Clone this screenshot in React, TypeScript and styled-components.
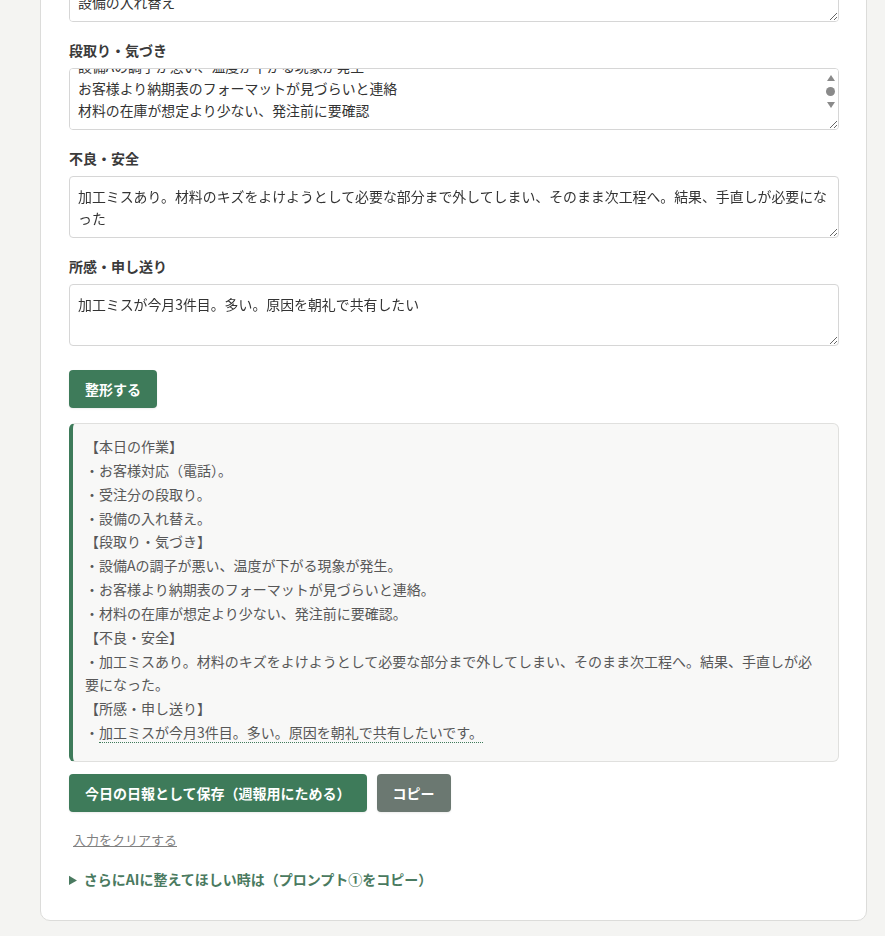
import React, { useEffect, useRef } from 'react';
import styled, { createGlobalStyle } from 'styled-components';

const GlobalStyle = createGlobalStyle`
  html, body {
    margin: 0;
    padding: 0;
    background: #f4f4f2;
    font-family: "Noto Sans CJK JP", "Noto Sans", sans-serif;
    color: #333;
    overflow: hidden;
  }
  * {
    box-sizing: border-box;
  }
`;

const green = '#3e7b5a';

const StyledPage = styled.div`
  padding: 0 18px 16px 40px;
`;

// the page is shown scrolled down, so the card starts above the viewport
const StyledCard = styled.div`
  margin-top: -97px;
  background: #fff;
  border: 1px solid #dcdcda;
  border-radius: 10px;
  padding: 28px 27px 30px 28px;
  display: flex;
  flex-direction: column;
`;

const StyledForm = styled.div`
  display: flex;
  flex-direction: column;
  gap: 18px;
`;

const StyledField = styled.div`
  display: flex;
  flex-direction: column;
`;

const StyledLabel = styled.label`
  font-size: 14px;
  line-height: 21px;
  font-weight: 700;
  color: #3a3a3a;
  margin-bottom: 7px;
`;

const StyledBox = styled.div`
  position: relative;
  display: flex;
`;

const StyledTextarea = styled.textarea`
  width: 100%;
  height: 62px;
  padding: 8px;
  border: 1px solid #d6d6d6;
  border-radius: 4px;
  font-family: inherit;
  font-size: 13.9px;
  line-height: 22px;
  color: #333;
  background: #fff;
  resize: vertical;
  outline: none;
`;

// native scrollbars are hidden in the capture, so draw the small one seen in the reference
const StyledScrollbar = styled.div`
  position: absolute;
  top: 7px;
  right: 4px;
  width: 9px;
  height: 33px;
  display: flex;
  flex-direction: column;
  align-items: center;
  justify-content: space-between;
  pointer-events: none;
`;

const StyledArrow = styled.span<{ $down?: boolean }>`
  width: 0;
  height: 0;
  border-left: 4.5px solid transparent;
  border-right: 4.5px solid transparent;
  ${({ $down }) =>
    $down ? 'border-top: 6px solid #8a8a8a;' : 'border-bottom: 6px solid #8a8a8a;'}
`;

const StyledThumb = styled.span`
  width: 9px;
  height: 9px;
  border-radius: 50%;
  background: #8a8a8a;
`;

const StyledButton = styled.button<{ $variant?: 'primary' | 'muted' }>`
  height: 38px;
  padding: 0 16px;
  border: none;
  border-radius: 4px;
  background: ${({ $variant }) => ($variant === 'muted' ? '#6b7871' : green)};
  color: #fff;
  font-family: inherit;
  font-size: 14px;
  font-weight: 700;
  cursor: pointer;
  box-shadow: 0 1px 2px rgba(0, 0, 0, 0.08);
`;

const StyledFormatRow = styled.div`
  display: flex;
  margin-top: 24px;
`;

const StyledOutput = styled.div`
  margin-top: 15px;
  background: #f8f8f7;
  border: 1px solid #e0e0de;
  border-left: 4px solid ${green};
  border-radius: 6px;
  padding: 11px 24px 16px 12px;
  font-size: 14px;
  line-height: 23.85px;
  color: #575757;
  white-space: pre-wrap;
`;

const StyledChanged = styled.span`
  border-bottom: 1px dotted ${green};
`;

const StyledActions = styled.div`
  display: flex;
  gap: 10px;
  margin-top: 12px;
`;

const StyledClear = styled.button`
  align-self: flex-start;
  margin-top: 17px;
  margin-left: 4px;
  padding: 0;
  border: none;
  background: none;
  font-family: inherit;
  font-size: 13px;
  line-height: 21px;
  color: #808080;
  text-decoration: underline;
  cursor: pointer;
`;

const StyledDetails = styled.details`
  margin-top: 19px;
`;

const StyledSummary = styled.summary`
  font-size: 14px;
  line-height: 21px;
  font-weight: 700;
  color: #4a7a60;
  cursor: pointer;
`;

const fields = [
  { label: '本日の作業', value: 'お客様対応（電話）\n受注分の段取り\n設備の入れ替え' },
  {
    label: '段取り・気づき',
    value:
      '設備Aの調子が悪い、温度が下がる現象が発生\nお客様より納期表のフォーマットが見づらいと連絡\n材料の在庫が想定より少ない、発注前に要確認',
    scrolled: true,
  },
  {
    label: '不良・安全',
    value:
      '加工ミスあり。材料のキズをよけようとして必要な部分まで外してしまい、そのまま次工程へ。結果、手直しが必要になった',
  },
  { label: '所感・申し送り', value: '加工ミスが今月3件目。多い。原因を朝礼で共有したい' },
];

const formatted = `【本日の作業】
・お客様対応（電話）。
・受注分の段取り。
・設備の入れ替え。
【段取り・気づき】
・設備Aの調子が悪い、温度が下がる現象が発生。
・お客様より納期表のフォーマットが見づらいと連絡。
・材料の在庫が想定より少ない、発注前に要確認。
【不良・安全】
・加工ミスあり。材料のキズをよけようとして必要な部分まで外してしまい、そのまま次工程へ。結果、手直しが必要になった。
【所感・申し送り】
・`;

const App: React.FC = () => {
  const formRef = useRef<HTMLDivElement>(null);

  useEffect(() => {
    formRef.current?.querySelectorAll('textarea').forEach((ta) => {
      if (ta.scrollHeight > ta.clientHeight) ta.scrollTop = ta.scrollHeight;
    });
  }, []);

  return (
    <>
      <GlobalStyle />
      <StyledPage>
        <StyledCard>
          <StyledForm ref={formRef}>
            {fields.map((f) => (
              <StyledField key={f.label}>
                <StyledLabel>{f.label}</StyledLabel>
                <StyledBox>
                  <StyledTextarea defaultValue={f.value} />
                  {f.scrolled && (
                    <StyledScrollbar>
                      <StyledArrow />
                      <StyledThumb />
                      <StyledArrow $down />
                    </StyledScrollbar>
                  )}
                </StyledBox>
              </StyledField>
            ))}
          </StyledForm>
          <StyledFormatRow>
            <StyledButton>整形する</StyledButton>
          </StyledFormatRow>
          <StyledOutput>
            {formatted}
            <StyledChanged>加工ミスが今月3件目。多い。原因を朝礼で共有したいです。</StyledChanged>
          </StyledOutput>
          <StyledActions>
            <StyledButton>今日の日報として保存（週報用にためる）</StyledButton>
            <StyledButton $variant="muted">コピー</StyledButton>
          </StyledActions>
          <StyledClear>入力をクリアする</StyledClear>
          <StyledDetails>
            <StyledSummary>さらにAIに整えてほしい時は（プロンプト①をコピー）</StyledSummary>
          </StyledDetails>
        </StyledCard>
      </StyledPage>
    </>
  );
};

export default App;
